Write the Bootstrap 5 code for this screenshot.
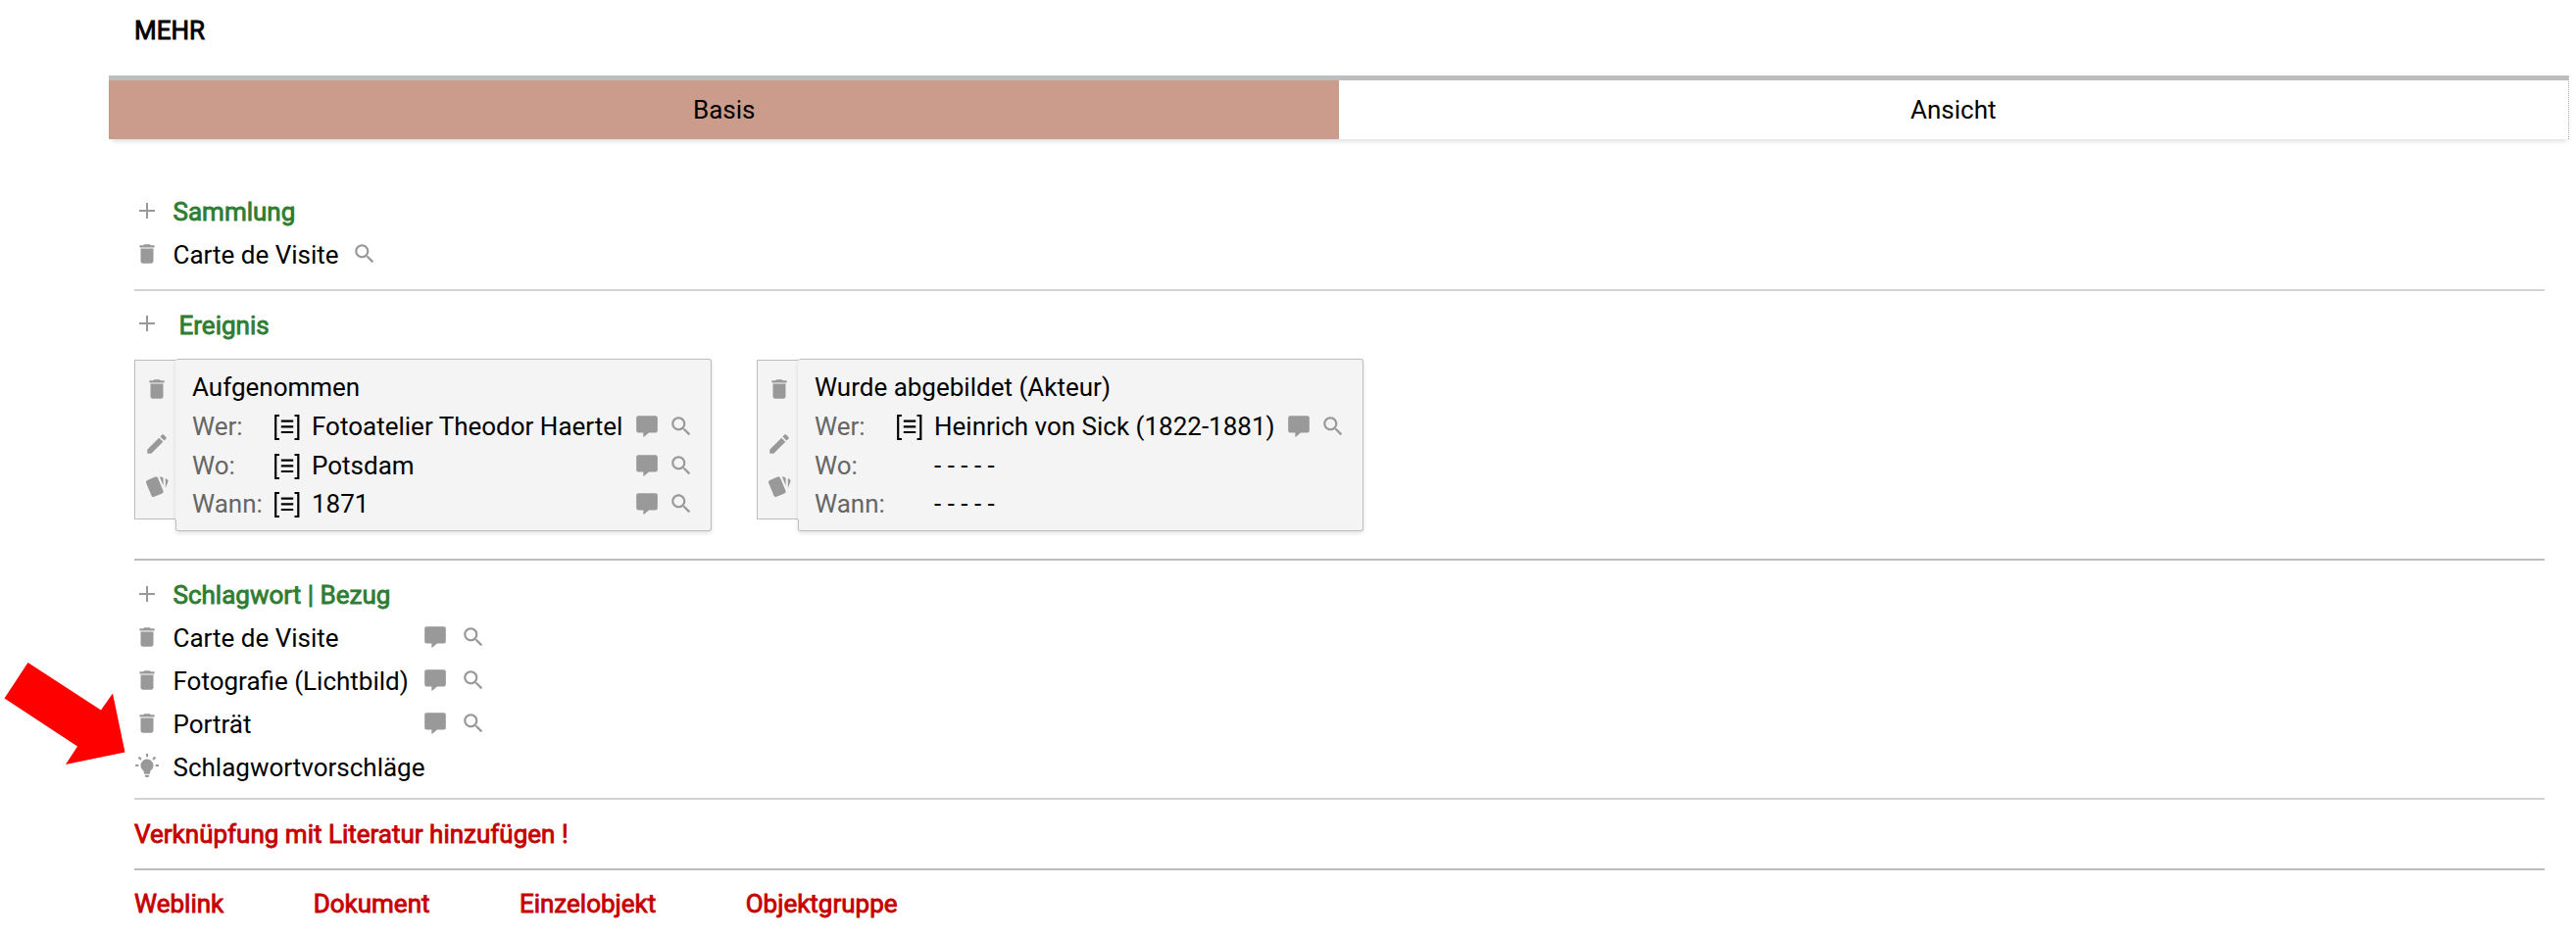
<!DOCTYPE html>
<html lang="de">
<head>
<meta charset="utf-8">
<title>Objekt</title>
<link href="https://cdn.jsdelivr.net/npm/bootstrap@5.3.0/dist/css/bootstrap.min.css" rel="stylesheet">
<style>
body{font-family:Roboto,"Liberation Sans",sans-serif;font-size:26px;line-height:44px;color:#000;background:#fff;height:955px;overflow:hidden;position:relative}
.ic{width:26px;height:26px;fill:#999;flex:none;display:block;margin-bottom:2px}
.turned{transform:rotate(180deg)}
.faux{-webkit-text-stroke:.85px currentColor}
.green{color:#2e7d32}
.red{color:#c60000}
.page{padding:9px 7px 0 111px}
.inner{padding:0 25px 0 26px}
.tabs{margin-top:24px;height:65px;border-top:5px solid #bdbdbd;border-right:1px dotted #aaa;box-shadow:0 5px 5px -3px rgba(0,0,0,.14)}
.tabs .on{background:#cb9c8b;border-left:1px solid #c49b8e}
.line{height:44px}
.line>.ic:first-child{margin-right:13.5px}
.term{width:254.5px}
.rule{height:2px;background:#bdbdbd}
.rule.soft{background:#d2d2d2}
.ev{height:176px}
.side{width:43px;height:163px;margin-top:1px;background:#f4f4f4;border:1px solid #bdbdbd;border-right:0;padding:8px 0 0 9px}
.box{background:#f4f4f4;border:1px solid #bdbdbd;border-left-color:#f4f4f4;border-radius:3px;padding:9px 17px 0 16px;margin-left:-1px;box-shadow:0 2px 4px rgba(0,0,0,.12);position:relative;height:176px}
.box:after{content:"";position:absolute;left:-1px;bottom:0;width:1px;height:11px;background:#bdbdbd}
.evrow{height:39.6px;line-height:39.6px}
.evrow:first-child{height:40.3px}
.evrow .ms-auto{margin-right:9.5px}
.key{width:77px;color:#666}
.key.wide{width:122px}
.ref{width:28px;height:28px;margin:0 11px 0 6px;flex:none;fill:none;stroke:#000;stroke-width:2.2}
.arrow{position:absolute;left:0;top:670px;width:135px;height:115px}
</style>
</head>
<body>
<svg class="d-none">
<symbol id="add" viewBox="0 0 26 26"><path d="M12 5h2v7h7v2h-7v7h-2v-7H5v-2h7z"/></symbol>
<symbol id="del" viewBox="0 0 24 24"><path d="M6 19c0 1.1.9 2 2 2h8c1.100 0 2-.9 2-2V7H6v12zM19 4h-3.500l-1-1h-5l-1 1H5v2h14V4z"/></symbol>
<symbol id="find" viewBox="0 0 24 24"><path d="M15.500 14h-.79l-.28-.27C15.410 12.590 16 11.110 16 9.500 16 5.910 13.090 3 9.500 3S3 5.910 3 9.500 5.910 16 9.500 16c1.610 0 3.090-.59 4.230-1.570l.27.28v.79l5 4.990L20.490 19l-4.990-5zm-6 0C7.010 14 5 11.990 5 9.500S7.010 5 9.500 5 14 7.010 14 9.500 11.990 14 9.500 14z"/></symbol>
<symbol id="note" viewBox="0 0 24 24"><path d="M4 2h16a2 2 0 0 1 2 2v12a2 2 0 0 1-2 2h-6.200L9.500 21.700a.5.500 0 0 1-.9-.35V18H4a2 2 0 0 1-2-2V4a2 2 0 0 1 2-2z"/></symbol>
<symbol id="pen" viewBox="0 0 24 24"><path d="M3 17.250V21h3.750L17.810 9.940l-3.750-3.750L3 17.250zM20.710 7.040c.39-.39.39-1.020 0-1.410l-2.340-2.340c-.39-.39-1.020-.39-1.410 0l-1.830 1.830 3.750 3.750 1.830-1.830z"/></symbol>
<symbol id="cards" viewBox="0 0 24 24"><path d="M2.530 19.650l1.340.56v-9.030l-2.430 5.860c-.41 1.020.08 2.190 1.090 2.610zm19.500-3.700L17.070 3.980c-.31-.75-1.040-1.210-1.810-1.230-.26 0-.53.040-.79.150L7.100 5.950c-.75.310-1.210 1.030-1.230 1.800-.01.270.040.540.150.800l4.960 11.970c.31.760 1.050 1.220 1.830 1.230.26 0 .52-.05.770-.15l7.360-3.050c1.020-.42 1.510-1.590 1.090-2.600zM5.880 19.750c0 1.100.9 2 2 2h1.450l-3.450-8.340v6.340z"/></symbol>
<symbol id="bulb" viewBox="0 0 24 24"><path d="M12,6A6,6 0 0,1 18,12C18,14.22 16.79,16.16 15,17.2V19A1,1 0 0,1 14,20H10A1,1 0 0,1 9,19V17.2C7.21,16.16 6,14.22 6,12A6,6 0 0,1 12,6M14,21V22A1,1 0 0,1 13,23H11A1,1 0 0,1 10,22V21H14M20,11H23V13H20V11M1,11H4V13H1V11M13,1V4H11V1H13M4.92,3.5L7.05,5.64L5.63,7.05L3.5,4.93L4.92,3.500M16.95,5.63L19.07,3.5L20.5,4.93L18.37,7.05L16.95,5.63Z"/></symbol>
<symbol id="ref" viewBox="0 0 28 28"><path d="M6 2H2.200v24H6M21.500 2h3.800v24h-3.800M7.800 7.600h12.400M7.800 13.300h12.400M7.800 19h12.400"/></symbol>
</svg>
<main class="page">
  <div class="inner faux">MEHR</div>
  <div class="tabs d-flex text-center">
    <div class="on w-50 d-flex align-items-center justify-content-center">Basis</div>
    <div class="w-50 d-flex align-items-center justify-content-center">Ansicht</div>
  </div>
  <div class="inner">
    <section style="padding-top:52px">
      <div class="line d-flex align-items-center"><svg class="ic"><use href="#add"/></svg><span class="green faux">Sammlung</span></div>
      <div class="line d-flex align-items-center"><svg class="ic"><use href="#del"/></svg><span>Carte de Visite</span><svg class="ic" style="margin-left:13px"><use href="#find"/></svg></div>
    </section>
    <div class="rule soft" style="margin-top:13px"></div>
    <section style="padding-top:13px">
      <div class="line d-flex align-items-center"><svg class="ic" style="margin-right:19.5px;margin-bottom:4px"><use href="#add"/></svg><span class="green faux">Ereignis</span></div>
      <div class="d-flex" style="margin-top:12px;gap:46px">
        <div class="ev d-flex">
          <div class="side"><svg class="ic" style="margin-top:8px"><use href="#del"/></svg><svg class="ic" style="margin-top:30px"><use href="#pen"/></svg><svg class="ic turned" style="margin-top:18px"><use href="#cards"/></svg></div>
          <div class="box" style="width:547px">
            <div class="evrow">Aufgenommen</div>
            <div class="evrow d-flex align-items-center"><span class="key">Wer:</span><svg class="ref"><use href="#ref"/></svg><span>Fotoatelier Theodor Haertel</span><svg class="ic ms-auto"><use href="#note"/></svg><svg class="ic"><use href="#find"/></svg></div>
            <div class="evrow d-flex align-items-center"><span class="key">Wo:</span><svg class="ref"><use href="#ref"/></svg><span>Potsdam</span><svg class="ic ms-auto"><use href="#note"/></svg><svg class="ic"><use href="#find"/></svg></div>
            <div class="evrow d-flex align-items-center"><span class="key">Wann:</span><svg class="ref"><use href="#ref"/></svg><span>1871</span><svg class="ic ms-auto"><use href="#note"/></svg><svg class="ic"><use href="#find"/></svg></div>
          </div>
        </div>
        <div class="ev d-flex">
          <div class="side"><svg class="ic" style="margin-top:8px"><use href="#del"/></svg><svg class="ic" style="margin-top:30px"><use href="#pen"/></svg><svg class="ic turned" style="margin-top:18px"><use href="#cards"/></svg></div>
          <div class="box" style="width:577px">
            <div class="evrow">Wurde abgebildet (Akteur)</div>
            <div class="evrow d-flex align-items-center"><span class="key">Wer:</span><svg class="ref"><use href="#ref"/></svg><span>Heinrich von Sick (1822-1881)</span><svg class="ic ms-auto"><use href="#note"/></svg><svg class="ic"><use href="#find"/></svg></div>
            <div class="evrow d-flex align-items-center"><span class="key wide">Wo:</span><span>- - - - -</span></div>
            <div class="evrow d-flex align-items-center"><span class="key wide">Wann:</span><span>- - - - -</span></div>
          </div>
        </div>
      </div>
    </section>
    <div class="rule" style="margin-top:28px"></div>
    <section style="padding-top:13px">
      <div class="line d-flex align-items-center"><svg class="ic"><use href="#add"/></svg><span class="green faux">Schlagwort | Bezug</span></div>
      <div class="line d-flex align-items-center"><svg class="ic"><use href="#del"/></svg><span class="term">Carte de Visite</span><svg class="ic" style="margin-right:13px"><use href="#note"/></svg><svg class="ic"><use href="#find"/></svg></div>
      <div class="line d-flex align-items-center"><svg class="ic"><use href="#del"/></svg><span class="term">Fotografie (Lichtbild)</span><svg class="ic" style="margin-right:13px"><use href="#note"/></svg><svg class="ic"><use href="#find"/></svg></div>
      <div class="line d-flex align-items-center"><svg class="ic"><use href="#del"/></svg><span class="term">Porträt</span><svg class="ic" style="margin-right:13px"><use href="#note"/></svg><svg class="ic"><use href="#find"/></svg></div>
      <div class="line d-flex align-items-center" style="height:43px"><svg class="ic" style="margin-bottom:4px"><use href="#bulb"/></svg><span>Schlagwortvorschläge</span></div>
    </section>
    <div class="rule soft" style="margin-top:10px"></div>
    <div class="red faux" style="padding-top:13px">Verknüpfung mit Literatur hinzufügen !</div>
    <div class="rule" style="margin-top:13px"></div>
    <div class="red faux d-flex" style="padding-top:12px;gap:91.4px"><span>Weblink</span><span>Dokument</span><span>Einzelobjekt</span><span>Objektgruppe</span></div>
  </div>
</main>
<svg class="arrow" viewBox="0 670 135 115"><path fill="#f00" d="M28.500 676 103 724.500 115 707.500 127.500 767.500 67 780 79 761.500 4.500 712.500z"/></svg>
<script src="https://cdn.jsdelivr.net/npm/bootstrap@5.3.0/dist/js/bootstrap.bundle.min.js"></script>
</body>
</html>
